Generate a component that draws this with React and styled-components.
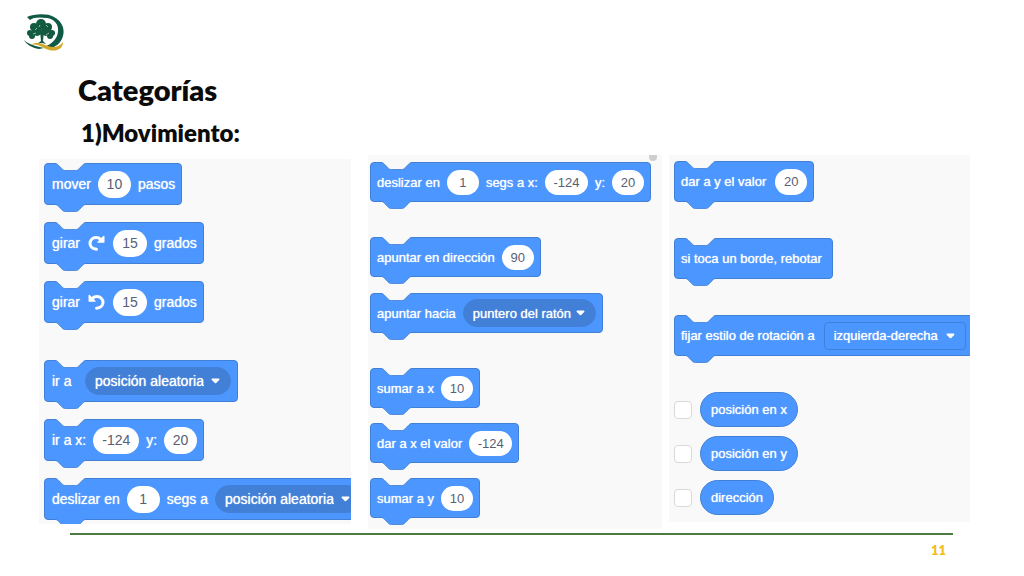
import React from "react";
import styled, { createGlobalStyle, css } from "styled-components";

const GlobalStyle = createGlobalStyle`
  *, *::before, *::after { box-sizing: border-box; }
  body { margin: 0; background: #fff; }
  input, select { font: inherit; margin: 0; }
`;

const BLUE = "#4c97ff";
const EDGE = "#4280d7";
const PANEL = "#f9f9f9";

const Slide = styled.main`
  display: flex;
  flex-direction: column;
  min-height: 100vh;
  background: #fff;
  color: #0b0b0b;
  font-family: Lato, "Open Sans", sans-serif;
`;

const Header = styled.header`
  padding: 13px 22px 0;
  height: 70px;
`;

const Logo = styled.svg`
  display: block;
  width: 44px;
  height: 40px;
`;

const Title = styled.h1`
  margin: 0;
  padding-left: 78px;
  font-size: 29px;
  line-height: 40px;
  font-weight: 800;
`;

const Subtitle = styled.h2`
  margin: 0;
  padding-left: 81px;
  font-size: 24px;
  line-height: 45px;
  font-weight: 800;
`;

const Panels = styled.section`
  display: grid;
  grid-template-columns: 312fr 311fr 308fr;
  align-items: start;
  padding: 0 54px 0 39px;
`;

const Panel = styled.div`
  position: relative;
  display: flex;
  flex-direction: column;
  gap: ${(p) => p.$groupGap}px;
  margin: ${(p) => p.$margin};
  padding: ${(p) => p.$padding};
  overflow: hidden;
  background: ${PANEL};
  font-family: "Liberation Sans", Arial, sans-serif;
  font-size: ${(p) => p.$font}px;
  --block: ${(p) => p.$block}px;
  --pill: ${(p) => p.$pill}px;
  --inset: ${(p) => p.$inset}px;
  --word-gap: ${(p) => p.$wordGap}px;
  --arrow-room: ${(p) => p.$arrowRoom}px;
`;

const Group = styled.div`
  display: flex;
  flex-direction: column;
  align-items: flex-start;
  gap: ${(p) => p.$gap}px;
`;

const whiteText = css`
  color: #fff;
  text-shadow: 0 0 1px rgba(255, 255, 255, 0.9);
  white-space: nowrap;
`;

const BlockBody = styled.div`
  position: relative;
  display: flex;
  flex: none;
  align-items: center;
  gap: var(--word-gap);
  height: var(--block);
  padding: 0 6px 0 var(--inset);
  border: 1px solid ${EDGE};
  border-radius: 4px;
  background: ${BLUE};
  ${whiteText}
`;

const Connector = styled.svg`
  position: absolute;
  left: 10px;
  width: 31px;
  height: 8px;
  ${(p) => (p.$tab ? "top: 100%;" : "top: -1px;")}
`;

const Word = styled.span`
  min-width: ${(p) => p.$min || 0}px;
`;

const Pill = styled.input`
  width: ${(p) => p.$width}px;
  height: var(--pill);
  padding: 0;
  border: 0;
  border-radius: 14px;
  background: #fff;
  color: #575e75;
  text-align: center;
`;

const Picker = styled.span`
  position: relative;
  display: flex;
  align-items: center;
  flex: none;
`;

const Select = styled.select`
  appearance: none;
  height: 28px;
  padding: 0 var(--arrow-room) 0 9px;
  border: 1px solid ${(p) => (p.$square ? "#3f80dd" : EDGE)};
  border-radius: ${(p) => (p.$square ? 4 : 14)}px;
  background: ${(p) => (p.$square ? BLUE : EDGE)};
  ${whiteText}
`;

const Arrow = styled.svg`
  position: absolute;
  right: 11px;
  width: 9px;
  height: 6px;
  pointer-events: none;
`;

const Turn = styled.svg`
  width: 19px;
  height: 18px;
`;

const ReporterRow = styled.label`
  display: flex;
  align-items: center;
  gap: 8px;
`;

const Check = styled.input`
  appearance: none;
  width: 18px;
  height: 18px;
  border: 1px solid #d9d9d9;
  border-radius: 4px;
  background: #fff;
`;

const Reporter = styled.span`
  padding: 0 10px;
  border: 1px solid ${EDGE};
  border-radius: 18px;
  background: ${BLUE};
  line-height: 33px;
  ${whiteText}
`;

const ScrollNub = styled.span`
  position: absolute;
  top: 0;
  right: 5px;
  width: 8px;
  height: 6px;
  border-radius: 0 0 4px 4px;
  background: #cecece;
`;

const Footer = styled.footer`
  margin: 4px 71px 0 70px;
  padding: 7px 7px 0 0;
  border-top: 2px solid #4b7a43;
  color: #f2bd1d;
  font-size: 13px;
  line-height: 16px;
  font-weight: 800;
  text-align: right;
`;

const EDGE_PATH = "M0 0.5c2 0 3 1 4 2l4 4c1 1 2 2 4 2h12c2 0 3 -1 4 -2l4 -4c1 -1 2 -2 4 -2";

function Block({ children }) {
  return (
    <BlockBody>
      <Connector viewBox="0 0 36 9" preserveAspectRatio="none" aria-hidden="true">
        <path d={`${EDGE_PATH}V0H0Z`} fill={PANEL} />
        <path d={EDGE_PATH} fill="none" stroke={EDGE} />
        <path d="M4 0H32V1.500H4Z" fill={PANEL} />
      </Connector>
      {children}
      <Connector $tab viewBox="0 0 36 9" preserveAspectRatio="none" aria-hidden="true">
        <path d={`${EDGE_PATH}V0H0Z`} fill={BLUE} />
        <path d={EDGE_PATH} fill="none" stroke={EDGE} />
        <path d="M4 0H32V1.500H4Z" fill={BLUE} />
      </Connector>
    </BlockBody>
  );
}

function Num({ value, label, width = 32 }) {
  return <Pill type="text" defaultValue={value} aria-label={label} $width={width} />;
}

function Choice({ value, label, square }) {
  return (
    <Picker>
      <Select aria-label={label} $square={square} defaultValue={value}>
        <option>{value}</option>
      </Select>
      <Arrow viewBox="0 0 9 6" aria-hidden="true">
        <path d="M1.2 0.5H7.8Q9 0.9 8.2 1.9L5.2 5Q4.5 5.6 3.8 5L0.8 1.9Q0 0.9 1.2 0.5Z" fill="#fff" />
      </Arrow>
    </Picker>
  );
}

function TurnIcon({ left }) {
  return (
    <Turn viewBox="0 0 19 18" aria-hidden="true">
      <g transform={left ? "translate(19 0) scale(-1 1)" : undefined}>
        <path d="M9.5 15.2C5.6 15 3 12.6 3 9.5C3 6 5.6 3.6 9 3.6C11 3.6 12.5 4.3 13.6 5.4" fill="none" stroke="#fff" strokeWidth="3" strokeLinecap="round" />
        <path d="M16.2 2.1Q17.5 1.2 17.5 2.7V8Q17.5 8.8 16.7 8.8H11Q9.7 8.7 10.6 7.8Z" fill="#fff" />
      </g>
    </Turn>
  );
}

function ReporterItem({ children }) {
  return (
    <ReporterRow>
      <Check type="checkbox" />
      <Reporter>{children}</Reporter>
    </ReporterRow>
  );
}

export default function App() {
  return (
    <Slide>
      <GlobalStyle />
      <Header>
        <Logo viewBox="0 0 44 40" role="img" aria-label="Logotipo">
          <path d="M5 4C12 1 25 0 32 4C40 8 43 16 41 23C39 30 34 34 27 36L22 34C30 31 35 26 36 19C37 11 32 6 25 5C18 4 11 4 8 7Z" fill="#0f5a45" />
          <path d="M2 27C6 31 13 33 22 35L17 36C10 35 4 31 2 27Z" fill="#0f5a45" />
          <g fill="#125a40">
            <circle cx="19" cy="11" r="5" />
            <circle cx="12" cy="14" r="4" />
            <circle cx="26" cy="14" r="4" />
            <circle cx="8" cy="20" r="3" />
            <circle cx="15" cy="18" r="5" />
            <circle cx="24" cy="18" r="5" />
            <circle cx="30" cy="20" r="3" />
            <circle cx="10" cy="23" r="3" />
            <circle cx="28" cy="23" r="3" />
            <path d="M18 18H22L21 28L24 31L20 30L15 31L19 28Z" />
          </g>
          <path d="M13 17l2-2M24 12l2 2M11 21l3-1M24 22l3-2M17 14l1-2" stroke="#8db9a7" fill="none" />
          <path d="M8 32C15 28 20 31 26 33C32 35 37 34 41 29C41 36 34 39 27 37C20 35 16 30 8 32Z" fill="#d3a72b" />
        </Logo>
      </Header>
      <Title>Categorías</Title>
      <Subtitle>1)Movimiento:</Subtitle>

      <Panels>
        <Panel $font={14} $block={42} $pill={27} $inset={7} $wordGap={7} $arrowRoom={26} $groupGap={37} $margin="4px 0 0" $padding="4px 0 4px 5px">
          <Group $gap={17}>
            <Block><Word>mover</Word><Num value="10" label="pasos" width={33} /><Word>pasos</Word></Block>
            <Block><Word>girar</Word><TurnIcon /><Num value="15" label="grados a la derecha" width={34} /><Word>grados</Word></Block>
            <Block><Word>girar</Word><TurnIcon left /><Num value="15" label="grados a la izquierda" width={34} /><Word>grados</Word></Block>
          </Group>
          <Group $gap={17}>
            <Block><Word $min={26}>ir a</Word><Choice value="posición aleatoria" label="ir a" /></Block>
            <Block><Word>ir a x:</Word><Num value="-124" label="x" width={46} /><Word>y:</Word><Num value="20" label="y" width={33} /></Block>
            <Block><Word>deslizar en</Word><Num value="1" label="segundos" width={33} /><Word>segs a</Word><Choice value="posición aleatoria" label="destino" /></Block>
          </Group>
        </Panel>

        <Panel $font={13} $block={40} $pill={25} $inset={6} $wordGap={7} $arrowRoom={23} $groupGap={35} $margin="0 0 0 17px" $padding="7px 0 11px 2px">
          <ScrollNub />
          <Group>
            <Block><Word>deslizar en</Word><Num value="1" label="segundos" /><Word>segs a x:</Word><Num value="-124" label="x" width={43} /><Word>y:</Word><Num value="20" label="y" /></Block>
          </Group>
          <Group $gap={16}>
            <Block><Word>apuntar en dirección</Word><Num value="90" label="dirección" /></Block>
            <Block><Word>apuntar hacia</Word><Choice value="puntero del ratón" label="apuntar hacia" /></Block>
          </Group>
          <Group $gap={15}>
            <Block><Word>sumar a x</Word><Num value="10" label="sumar a x" /></Block>
            <Block><Word>dar a x el valor</Word><Num value="-124" label="valor de x" width={43} /></Block>
            <Block><Word>sumar a y</Word><Num value="10" label="sumar a y" /></Block>
          </Group>
        </Panel>

        <Panel $font={13} $block={41} $pill={26} $inset={6} $wordGap={9} $arrowRoom={26} $groupGap={36} $margin="0 0 0 7px" $padding="6px 0 7px 5px">
          <Group $gap={36}>
            <Block><Word>dar a y el valor</Word><Num value="20" label="valor de y" /></Block>
            <Block><Word $min={145}>si toca un borde, rebotar</Word></Block>
            <Block><Word>fijar estilo de rotación a</Word><Choice square value="izquierda-derecha" label="estilo de rotación" /></Block>
          </Group>
          <Group $gap={9}>
            <ReporterItem>posición en x</ReporterItem>
            <ReporterItem>posición en y</ReporterItem>
            <ReporterItem>dirección</ReporterItem>
          </Group>
        </Panel>
      </Panels>
      <Footer>11</Footer>
    </Slide>
  );
}
